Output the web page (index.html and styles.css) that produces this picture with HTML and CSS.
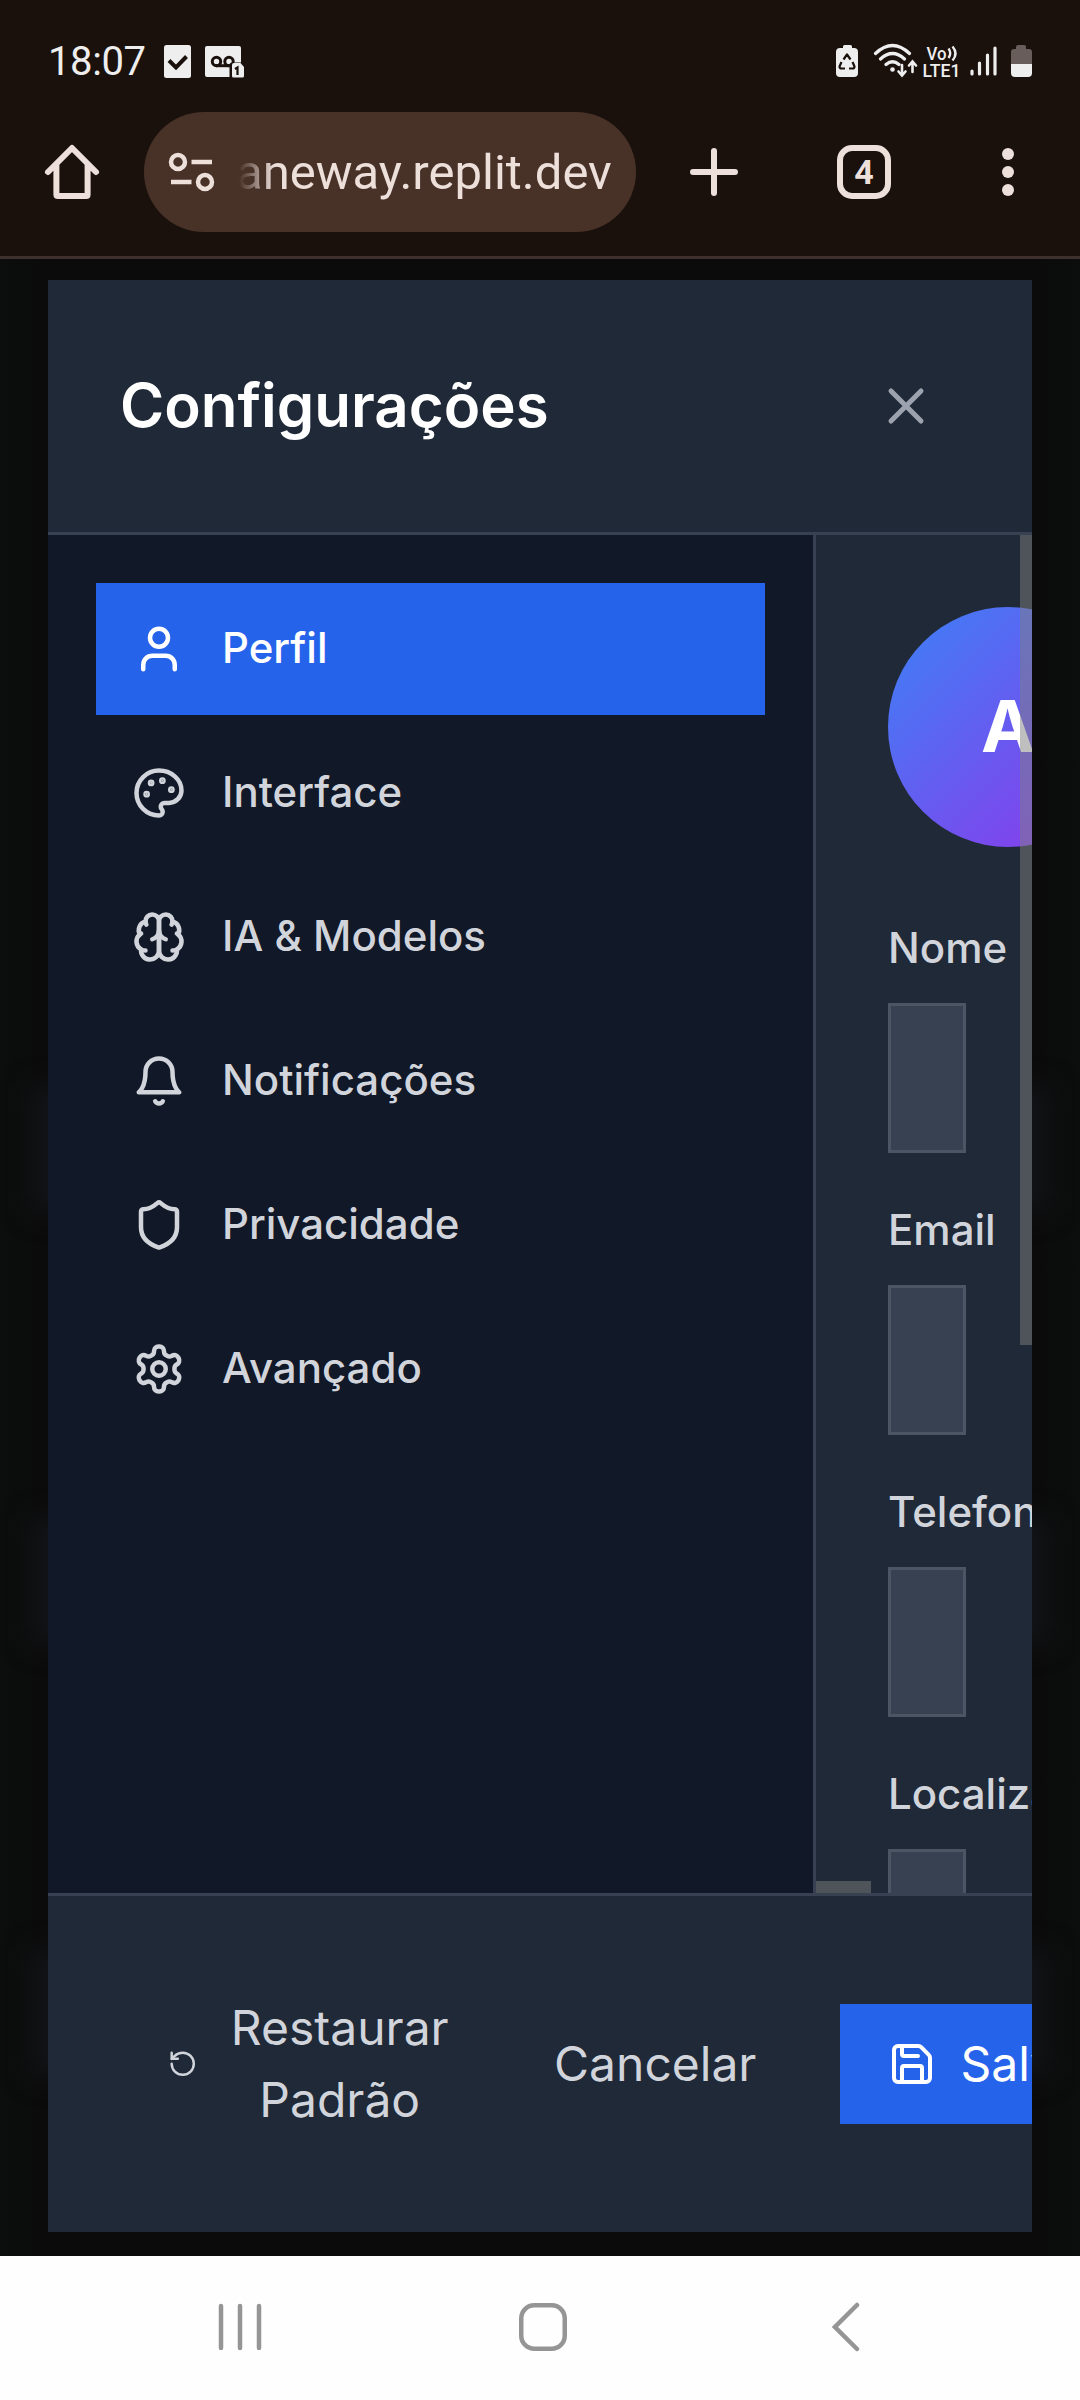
FILE: index.html
```html
<!DOCTYPE html>
<html lang="pt-BR">
<head>
<meta charset="utf-8">
<title>Configurações</title>
<link rel="stylesheet" href="styles.css">
</head>
<body>
<header class="chrome">
  <div class="status">
    <span class="clock">18:07</span>
    <svg class="st-check" width="27" height="33" viewBox="0 0 27 33"><rect width="27" height="33" rx="2.5" fill="#eee"/><path d="M5 15.500l7 7L22.500 11.500" fill="none" stroke="#1a110d" stroke-width="4"/></svg>
    <svg class="st-voice" width="40" height="33" viewBox="0 0 40 33"><rect y="1" width="36" height="31" rx="2" fill="#eee"/><g fill="none" stroke="#1a110d" stroke-width="3"><circle cx="11.500" cy="16.500" r="4.200"/><circle cx="24" cy="16.500" r="4.200"/><path d="M11 20.700h14"/></g><path d="M24.500 33V20q0-2.500 2.500-2.500h13V33z" fill="#1a110d"/><path d="M27 20q0-2 2-2h6.500l3.500 4v9q0 1.500-1.500 1.500H28.500q-1.500 0-1.500-1.500z" fill="#eee"/><path d="M30 24l2.500-1.500V30" fill="none" stroke="#1a110d" stroke-width="2.200"/></svg>
    <span class="spacer"></span>
    <svg width="200" height="36" viewBox="0 0 200 36">
      <g fill="#eee">
        <path d="M7 5V3.500q0-1.500 1.500-1.500h6q1.500 0 1.500 1.500V5h2q4 0 4 4v21q0 4-4 4H4q-4 0-4-4V9q0-4 4-4z"/>
        <circle cx="56.500" cy="26.500" r="2.300"/>
      </g>
      <g fill="none" stroke="#1a110d" stroke-width="2.200" stroke-linejoin="round"><path d="M7.500 16.500L11 11.500l3.500 5M5.500 19l-2 4.500q0 2 2 2H9M16.500 19l2 4.500q0 2-2 2H13"/></g>
      <g fill="none" stroke="#eee" stroke-width="3.200" stroke-linecap="round">
        <path d="M39.500 10.500Q56.500-5.500 73.500 10.500M44.500 16Q56.500 5 68.500 16M50 21.500Q56.500 16 63 21.500"/>
        <path d="M66 22v9M62.500 28.500l3.500 4 3.500-4M76.500 29v-9M73 22.500l3.500-4 3.500 4" stroke-width="2.600"/>
        <path d="M136 28v3M143.500 20v11M151.500 12v19M159 5v26"/>
      </g>
      <text class="volte" x="90.500" y="16.500" textLength="20" lengthAdjust="spacingAndGlyphs">Vo</text>
      <path d="M112.500 5.500q3.500 4.500 0 9.500M116.500 3.500q6 7 0 14" fill="none" stroke="#eee" stroke-width="2.400"/>
      <text class="volte" x="86.500" y="34" textLength="38" lengthAdjust="spacingAndGlyphs">LTE1</text>
      <path d="M175 21V9q0-3 3-3h2V4q0-2 2-2h6q2 0 2 2v2h3q3 0 3 3v12z" fill="#685d5a"/>
      <path d="M175 21h21v9q0 4-4 4h-13q-4 0-4-4z" fill="#eee"/>
    </svg>
  </div>
  <div class="toolbar">
    <svg class="home" width="72" height="72" viewBox="0 0 24 24" fill="none" stroke="#eddfda" stroke-width="2" stroke-linecap="round" stroke-linejoin="round"><path d="M4 12L12 4l8 8M6.800 9.500V19.500q0 .500.500.500h9.400q.500 0 .500-.500V9.500"/></svg>
    <div class="omnibox">
      <svg width="48" height="40" viewBox="0 0 48 40" fill="none" stroke="#eddfda" stroke-width="4.500"><circle cx="10" cy="10" r="7"/><circle cx="37" cy="30" r="7"/><path d="M23.500 10H44M3 30h20.500"/></svg>
      <span class="url">aneway.replit.dev</span>
    </div>
    <svg class="plus" width="48" height="48" viewBox="0 0 48 48" stroke="#eddfda" stroke-width="6" stroke-linecap="round"><path d="M24 3v42M3 24h42"/></svg>
    <span class="tabs">4</span>
    <span class="dots"><i></i><i></i><i></i></span>
  </div>
</header>

<main class="page">
  <div class="glow g1"></div><div class="glow g2"></div><div class="glow g3"></div>
  <section class="modal">
    <div class="modal-head">
      <h2>Configurações</h2>
      <svg class="ico" width="60" height="60" viewBox="0 0 24 24"><path d="M18 6 6 18M6 6l12 12"/></svg>
    </div>
    <div class="modal-body">
      <nav class="side">
        <a class="item active"><svg class="ico" width="54" height="54" viewBox="0 0 24 24"><path d="M19 21v-2a4 4 0 0 0-4-4H9a4 4 0 0 0-4 4v2"/><circle cx="12" cy="7" r="4"/></svg><span>Perfil</span></a>
        <a class="item"><svg class="ico" width="54" height="54" viewBox="0 0 24 24"><circle cx="13.500" cy="6.500" r=".5" fill="currentColor"/><circle cx="17.500" cy="10.500" r=".5" fill="currentColor"/><circle cx="8.500" cy="7.500" r=".5" fill="currentColor"/><circle cx="6.500" cy="12.500" r=".5" fill="currentColor"/><path d="M12 2C6.500 2 2 6.500 2 12s4.500 10 10 10c.926 0 1.648-.746 1.648-1.688 0-.437-.18-.835-.437-1.125-.29-.289-.438-.652-.438-1.125a1.640 1.640 0 0 1 1.668-1.668h1.996c3.051 0 5.555-2.503 5.555-5.554C21.965 6.012 17.461 2 12 2z"/></svg><span>Interface</span></a>
        <a class="item"><svg class="ico" width="54" height="54" viewBox="0 0 24 24"><path d="M12 5a3 3 0 1 0-5.997.125 4 4 0 0 0-2.526 5.770 4 4 0 0 0 .556 6.588A4 4 0 1 0 12 18Z"/><path d="M12 5a3 3 0 1 1 5.997.125 4 4 0 0 1 2.526 5.770 4 4 0 0 1-.556 6.588A4 4 0 1 1 12 18Z"/><path d="M15 13a4.500 4.500 0 0 1-3-4 4.500 4.500 0 0 1-3 4"/><path d="M17.599 6.500a3 3 0 0 0 .399-1.375M6.003 5.125A3 3 0 0 0 6.401 6.500M3.477 10.896a4 4 0 0 1 .585-.396M19.938 10.500a4 4 0 0 1 .585.396M6 18a4 4 0 0 1-1.967-.516M19.967 17.484A4 4 0 0 1 18 18"/></svg><span>IA &amp; Modelos</span></a>
        <a class="item"><svg class="ico" width="54" height="54" viewBox="0 0 24 24"><path d="M6 8a6 6 0 0 1 12 0c0 7 3 9 3 9H3s3-2 3-9M10.300 21a1.940 1.940 0 0 0 3.400 0"/></svg><span>Notificações</span></a>
        <a class="item"><svg class="ico" width="54" height="54" viewBox="0 0 24 24"><path d="M20 13c0 5-3.500 7.500-7.660 8.950a1 1 0 0 1-.67-.01C7.500 20.500 4 18 4 13V6a1 1 0 0 1 1-1c2 0 4.500-1.200 6.240-2.720a1.170 1.170 0 0 1 1.520 0C14.510 3.810 17 5 19 5a1 1 0 0 1 1 1z"/></svg><span>Privacidade</span></a>
        <a class="item"><svg class="ico" width="54" height="54" viewBox="0 0 24 24"><path d="M12.220 2h-.44a2 2 0 0 0-2 2v.18a2 2 0 0 1-1 1.730l-.43.25a2 2 0 0 1-2 0l-.15-.08a2 2 0 0 0-2.730.73l-.22.38a2 2 0 0 0 .73 2.730l.15.1a2 2 0 0 1 1 1.720v.51a2 2 0 0 1-1 1.740l-.15.09a2 2 0 0 0-.73 2.730l.22.38a2 2 0 0 0 2.730.73l.15-.08a2 2 0 0 1 2 0l.43.25a2 2 0 0 1 1 1.730V20a2 2 0 0 0 2 2h.44a2 2 0 0 0 2-2v-.18a2 2 0 0 1 1-1.730l.43-.25a2 2 0 0 1 2 0l.15.08a2 2 0 0 0 2.730-.73l.22-.39a2 2 0 0 0-.73-2.730l-.15-.08a2 2 0 0 1-1-1.740v-.5a2 2 0 0 1 1-1.740l.15-.09a2 2 0 0 0 .73-2.730l-.22-.38a2 2 0 0 0-2.730-.73l-.15.08a2 2 0 0 1-2 0l-.43-.25a2 2 0 0 1-1-1.730V4a2 2 0 0 0-2-2z"/><circle cx="12" cy="12" r="3"/></svg><span>Avançado</span></a>
      </nav>
      <div class="panel">
        <div class="avatar">A</div>
        <label class="field">Nome<span class="input"></span></label>
        <label class="field">Email<span class="input"></span></label>
        <label class="field">Telefone<span class="input"></span></label>
        <label class="field">Localização<span class="input"></span></label>
        <span class="bar-v"></span><span class="bar-h"></span>
      </div>
    </div>
    <div class="modal-foot">
      <div class="btn restore"><svg class="ico" width="29.500" height="29.500" viewBox="0 0 24 24"><path d="M3 12a9 9 0 1 0 9-9 9.750 9.750 0 0 0-6.740 2.740L3 8"/><path d="M3 3v5h5"/></svg><span>Restaurar<br>Padrão</span></div>
      <div class="btn">Cancelar</div>
      <div class="btn save"><svg class="ico" width="48" height="48" viewBox="0 0 24 24"><path d="M15.200 3a2 2 0 0 1 1.400.6l3.800 3.800a2 2 0 0 1 .6 1.400V19a2 2 0 0 1-2 2H5a2 2 0 0 1-2-2V5a2 2 0 0 1 2-2z"/><path d="M17 21v-7a1 1 0 0 0-1-1H8a1 1 0 0 0-1 1v7M7 3v4a1 1 0 0 0 1 1h7"/></svg>Salvar</div>
    </div>
  </section>
</main>

<footer class="sysnav">
  <svg width="44" height="48" viewBox="0 0 44 48" stroke="#959595" stroke-width="4.500" stroke-linecap="round"><path d="M3 3v42M22 3v42M41 3v42"/></svg>
  <svg width="48" height="48" viewBox="0 0 48 48" fill="none" stroke="#959595" stroke-width="4.500"><rect x="2.250" y="2.250" width="43.500" height="43.500" rx="13"/></svg>
  <svg width="28" height="50" viewBox="0 0 28 50" fill="none" stroke="#959595" stroke-width="4.500" stroke-linecap="round"><path d="M25 3L3 25l22 22"/></svg>
</footer>
</body>
</html>
```
FILE: styles.css
```css
* { box-sizing: border-box; }
body { margin: 0; width: 1080px; height: 2400px; display: flex; flex-direction: column; overflow: hidden; background: #0c0c0c; font-family: Inter, "Liberation Sans", sans-serif; }
svg { display: block; flex: none; }

/* Browser chrome */
.chrome { height: 259px; flex: none; background: #1a110d; border-bottom: 3px solid #3d302d; color: #eddfda; font-family: Roboto, sans-serif; }
.status { height: 112px; padding: 10px 44px 0 48px; display: flex; align-items: center; }
.clock { font-size: 40px; line-height: 48px; color: #eee; width: 116px; letter-spacing: -.4px; font-weight: 400; padding-top: 1px; }
.st-check { margin-top: 1px; }
.st-voice { margin: 1px 0 0 14px; }
.spacer { flex: 1; }
.volte { font: 500 18.500px Roboto, sans-serif; fill: #eee; }
.toolbar { height: 120px; padding: 0 66px 0 36px; display: flex; align-items: center; }
.omnibox { width: 492px; height: 120px; margin-left: 36px; border-radius: 60px; background: #483127; display: flex; align-items: center; padding-left: 24px; overflow: hidden; }
.url { margin: 1px 0 0 20px; font-size: 49px; line-height: 60px; white-space: nowrap; -webkit-mask-image: linear-gradient(90deg, transparent 3px, #000 38px); mask-image: linear-gradient(90deg, transparent 3px, #000 38px); }
.plus { margin-left: 54px; }
.tabs { width: 54px; height: 54px; margin-left: 99px; border: 6px solid; border-radius: 15px; text-align: center; font-weight: 700; font-size: 34px; line-height: 43px; }
.dots { margin-left: auto; display: flex; flex-direction: column; gap: 6px; }
.dots i { width: 12px; height: 12px; border-radius: 50%; background: currentColor; }

/* Dimmed page behind the dialog */
.page { height: 1997px; flex: none; position: relative; padding: 21px 48px 24px; overflow: hidden; background: linear-gradient(90deg, #0b0e0d 0, #0b0b0b 40px, #0b0b0b 1040px, #0b0e0d 1080px); }
.glow { position: absolute; left: 30px; right: 30px; height: 130px; background: #121316; filter: blur(12px); }
.g1 { top: 825px; }
.g2 { top: 1257px; }
.g3 { top: 1689px; }

/* Dialog */
.modal { position: relative; height: 1952px; display: flex; flex-direction: column; background: #1f2937; overflow: hidden; }
.ico { fill: none; stroke: currentColor; stroke-width: 2; stroke-linecap: round; stroke-linejoin: round; }
.modal-head { height: 255px; flex: none; padding: 0 96px 0 72px; display: flex; align-items: center; justify-content: space-between; border-bottom: 3px solid #374151; color: #9ca3af; }
h2 { margin: 0 0 2px; font-size: 60px; line-height: 84px; font-weight: 600; color: #fff; }
.modal-body { height: 1358px; flex: none; display: flex; overflow: hidden; }
.side { width: 768px; flex: none; padding: 48px; display: flex; flex-direction: column; gap: 12px; background: #111827; border-right: 3px solid #374151; }
.item { height: 132px; padding: 0 36px; display: flex; align-items: center; gap: 36px; font-size: 42px; font-weight: 500; color: #d1d5db; }
.item span { margin-bottom: 3px; }
.active { background: #2563eb; color: #fff; }
.panel { position: relative; width: 216px; flex: none; padding: 72px; overflow: hidden; }
.avatar { width: 240px; height: 240px; margin-bottom: 71px; border-radius: 50%; background: linear-gradient(135deg, #3b82f6, #9333ea); color: #fff; font-size: 72px; font-weight: 700; line-height: 238px; text-align: center; }
.field { display: block; margin-bottom: 47px; font-size: 42px; line-height: 60px; font-weight: 500; color: #d1d5db; white-space: nowrap; }
.input { display: block; width: 78px; height: 150px; margin-top: 25px; background: #374151; border: 3px solid #4b5563; }
.bar-v, .bar-h { position: absolute; background: rgba(128, 128, 128, .5); }
.bar-v { top: 0; right: 0; width: 12px; height: 810px; }
.bar-h { left: 0; bottom: 0; width: 55px; height: 12px; }
.modal-foot { flex: 1; padding: 0 72px; display: flex; align-items: center; border-top: 3px solid #374151; font-size: 48px; line-height: 72px; color: #d1d5db; }
.btn { flex: none; height: 120px; padding: 24px 48px; display: flex; align-items: center; gap: 24px; }
.restore { width: 386px; height: 192px; text-align: center; }
.restore span { flex: 1; }
.save { margin-left: 36px; background: #2563eb; color: #fff; }

/* System navigation */
.sysnav { height: 144px; background: #fefefe; padding: 0 220px 2px 218px; display: flex; align-items: center; justify-content: space-between; }
.sysnav svg:nth-child(2) { margin-right: 9px; }
```
